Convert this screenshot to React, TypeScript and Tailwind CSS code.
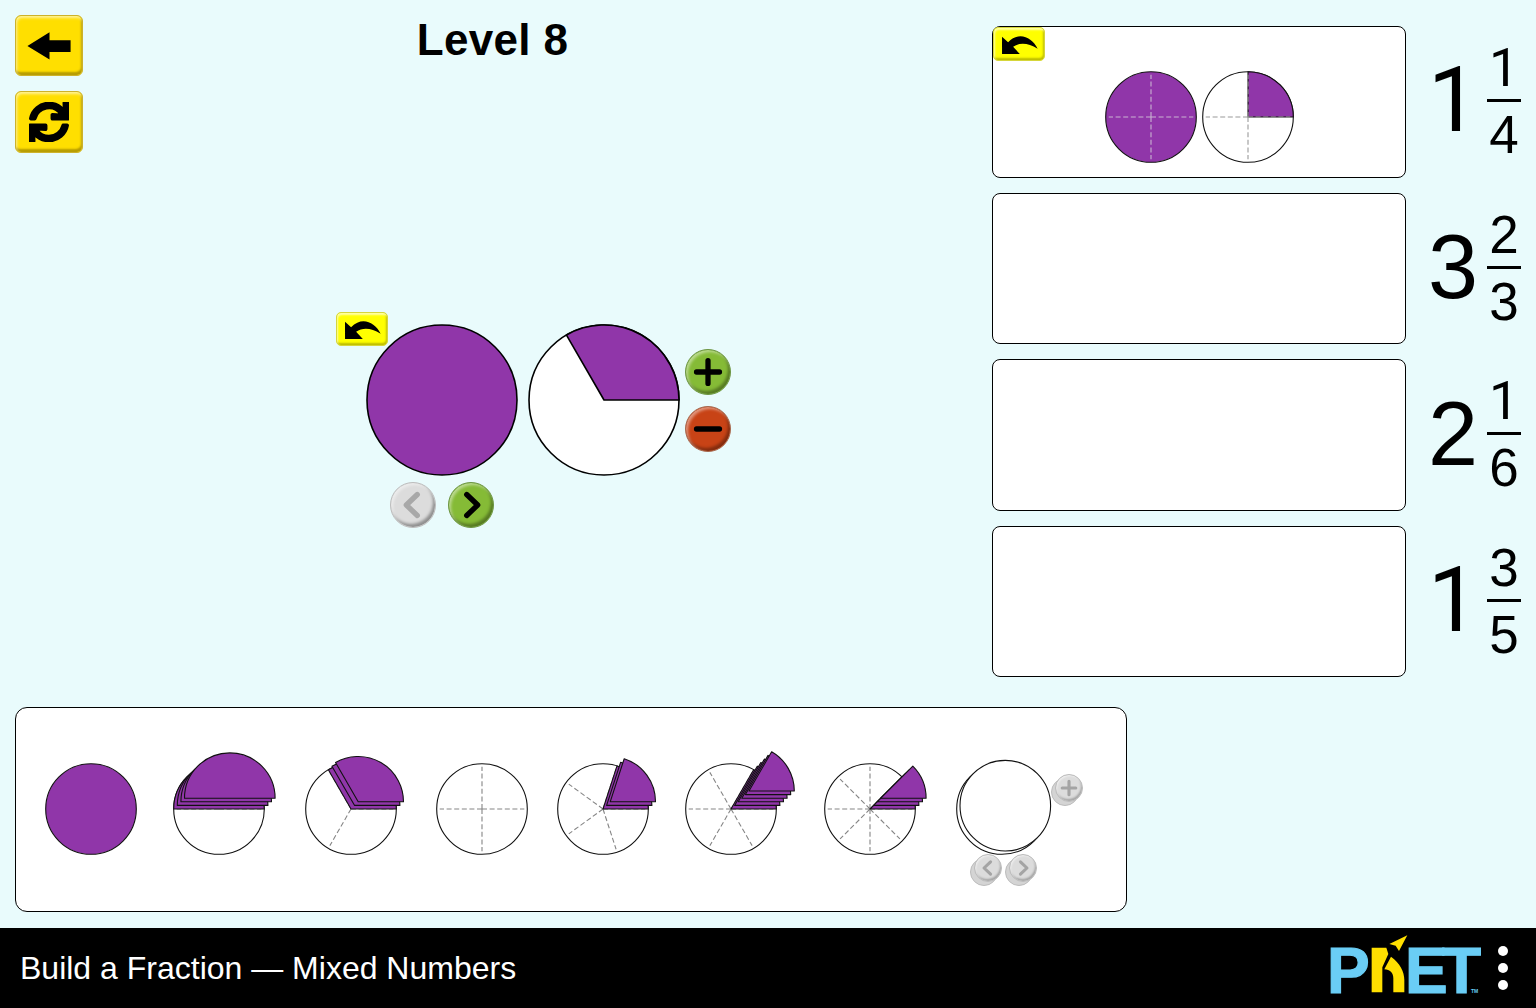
import { FaSync } from "react-icons/fa";

const PURPLE = "#9036a9";
const fontSans = "font-['Liberation_Sans',Arial,sans-serif]";

// wedge from angle 0 going counter-clockwise, centre at origin
function wedgePath(r: number, parts: number) {
  const a = (2 * Math.PI) / parts;
  const x = r * Math.cos(a);
  const y = -r * Math.sin(a);
  const large = parts < 2 ? 1 : 0;
  return `M0 0 L${r} 0 A${r} ${r} 0 ${large} 0 ${x.toFixed(2)} ${y.toFixed(2)} Z`;
}

function Dashes({ r, parts, color = "#858585" }: { r: number; parts: number; color?: string }) {
  const lines = [];
  for (let i = 0; i < parts; i++) {
    const a = (2 * Math.PI * i) / parts;
    lines.push(
      <line
        key={i}
        x1={0}
        y1={0}
        x2={(r - 3) * Math.cos(a)}
        y2={-(r - 3) * Math.sin(a)}
        stroke={color}
        strokeWidth={1.1}
        strokeDasharray="5 2.6"
      />
    );
  }
  return <>{lines}</>;
}

function Pie({
  parts = 1,
  pieces = 0,
  whole = false,
  dashesOnTop = false,
  dashColor,
}: {
  parts?: number;
  pieces?: number;
  whole?: boolean;
  dashesOnTop?: boolean;
  dashColor?: string;
}) {
  const r = 45.3;
  const stack = [];
  for (let i = 0; i < pieces; i++) {
    stack.push(
      <path
        key={i}
        d={wedgePath(r, parts)}
        transform={`translate(${i * 3.6} ${-i * 3.6})`}
        fill={PURPLE}
        stroke="#111"
        strokeWidth={1.1}
        strokeLinejoin="round"
      />
    );
  }
  return (
    <svg width={92} height={92} viewBox="-46 -46 92 92" className="block shrink-0 overflow-visible">
      <circle r={r} fill={whole ? PURPLE : "#fff"} stroke="#111" strokeWidth={1.1} />
      {!dashesOnTop && parts > 1 && <Dashes r={r} parts={parts} />}
      {stack}
      {dashesOnTop && <Dashes r={r} parts={parts} color={dashColor} />}
    </svg>
  );
}

function BigPie({ third = false }: { third?: boolean }) {
  const r = 75;
  return (
    <svg width={152} height={152} viewBox="-76 -76 152 152" className="block shrink-0">
      <circle r={r} fill={third ? "#fff" : PURPLE} stroke="#000" strokeWidth={1.6} />
      {third && <path d={wedgePath(r, 3)} fill={PURPLE} stroke="#000" strokeWidth={1.6} strokeLinejoin="round" />}
    </svg>
  );
}

function UndoIcon() {
  return (
    <svg width={42} height={27} viewBox="60 45 125 80" className="block">
      <path d="M72 62 L72 113 L125 113 L105 92 C125 78 150 80 178 98 C160 62 122 46 90 78 Z" fill="#000" />
    </svg>
  );
}

function UndoButton({ className }: { className: string }) {
  return (
    <div
      className={`absolute z-10 flex h-[34px] w-[52px] items-center justify-center rounded-[5px] border border-[#d6d63a] bg-[#ffff00] shadow-[inset_1px_2px_2px_rgba(255,255,255,0.65),inset_-1px_-2px_2px_rgba(90,90,0,0.4)] ${className}`}
    >
      <UndoIcon />
    </div>
  );
}

function YellowButton({ className, children }: { className: string; children: React.ReactNode }) {
  return (
    <div
      className={`flex w-[68px] items-center justify-center rounded-[6px] border border-[#cdb22a] bg-[#ffdf00] shadow-[inset_1px_2px_3px_rgba(255,255,255,0.6),inset_-1px_-3px_2px_rgba(110,90,0,0.5)] ${className}`}
    >
      {children}
    </div>
  );
}

type IconName = "plus" | "minus" | "left" | "right";

function RoundIcon({ name, color, size }: { name: IconName; color: string; size: number }) {
  const common = { stroke: color, strokeWidth: 5.5, strokeLinecap: "round" as const, strokeLinejoin: "round" as const, fill: "none" };
  return (
    <svg width={size} height={size} viewBox="0 0 46 46" className="block">
      {name === "plus" && <path d="M23 11 V35 M11 23 H35" {...common} />}
      {name === "minus" && <path d="M11 23 H35" {...common} />}
      {name === "left" && <path d="M27.5 12 L16 23 L27.5 34" {...common} />}
      {name === "right" && <path d="M18.5 12 L30 23 L18.5 34" {...common} />}
    </svg>
  );
}

function RoundButton({ name, tone }: { name: IconName; tone: "green" | "red" | "gray" }) {
  const bg =
    tone === "green"
      ? "bg-[#85bb36] border-[#6d9544]"
      : tone === "red"
        ? "bg-[#c84316] border-[#a66a50]"
        : "bg-[#dcdcdc] border-[#bdbdbd]";
  return (
    <div
      className={`flex h-[46px] w-[46px] items-center justify-center rounded-full border shadow-[inset_2px_2px_3px_rgba(255,255,255,0.45),inset_-2px_-3px_3px_rgba(0,0,0,0.35)] ${bg}`}
    >
      <RoundIcon name={name} color={tone === "gray" ? "#a8a8a8" : "#000"} size={46} />
    </div>
  );
}

function SmallGrayButton({ name, className }: { name: IconName; className: string }) {
  return (
    <div className={`absolute h-[28px] w-[28px] ${className}`}>
      <div className="absolute -left-[4px] top-[4px] h-[28px] w-[28px] rounded-full border border-[#bcbcbc] bg-[#d4d4d4]" />
      <div className="absolute inset-0 flex items-center justify-center rounded-full border border-[#bcbcbc] bg-[#dcdcdc] shadow-[inset_1px_1px_2px_rgba(255,255,255,0.6),inset_-1px_-2px_2px_rgba(0,0,0,0.25)]">
        <RoundIcon name={name} color="#a4a4a4" size={28} />
      </div>
    </div>
  );
}

// Liberation's "1" has a foot, the reference's has none
function digitFont(n: number) {
  return n === 1 ? "font-['Roboto',Arial,sans-serif]" : "";
}

function Fraction({ whole, top, bottom }: { whole: number; top: number; bottom: number }) {
  return (
    <div className="ml-[22px] flex items-center text-black">
      <div className={`w-[50px] pb-[2px] text-[90px] leading-[90px] ${digitFont(whole)}`}>{whole}</div>
      <div className="ml-[9px] flex w-[34px] flex-col items-center text-[53px] leading-[50px]">
        <div className={`mb-[6px] ${digitFont(top)}`}>{top}</div>
        <div className="h-[3px] w-full bg-black" />
        <div className={`mt-[8px] ${digitFont(bottom)}`}>{bottom}</div>
      </div>
    </div>
  );
}

const targets = [
  { whole: 1, top: 1, bottom: 4 },
  { whole: 3, top: 2, bottom: 3 },
  { whole: 2, top: 1, bottom: 6 },
  { whole: 1, top: 3, bottom: 5 },
];

const trayItems = [
  { cls: "", parts: 1, pieces: 0, whole: true },
  { cls: "ml-[36px]", parts: 2, pieces: 4, whole: false },
  { cls: "ml-[39.7px]", parts: 3, pieces: 3, whole: false },
  { cls: "ml-[39.3px]", parts: 4, pieces: 0, whole: false },
  { cls: "ml-[29px]", parts: 5, pieces: 3, whole: false },
  { cls: "ml-[36.4px]", parts: 6, pieces: 6, whole: false },
  { cls: "ml-[46.6px]", parts: 8, pieces: 4, whole: false },
];

function PhetLogo() {
  return (
    <svg width={152} height={66} viewBox="0 0 152 66" className="block shrink-0 overflow-visible">
      <g fontFamily="'Liberation Sans', Arial, sans-serif" fontWeight={700} fontSize={64} fill="#6acdf5" stroke="#6acdf5" strokeWidth={1.2}>
        <text x={-3} y={57.5}>P</text>
        <text x={75} y={57.5} letterSpacing={-5.7}>ET</text>
      </g>
      <text x={141} y={57.5} fontFamily="'Liberation Sans', Arial, sans-serif" fontSize={5} fontWeight={700} fill="#6acdf5">TM</text>
      <g transform="translate(-5 -5) scale(0.3333)" fill="#ffdf00">
        <path d="M140 53 L184 53 L190 72 L172 112 L172 187 L140 187 Z" />
        <path d="M198 80 C225 100 238 125 238 150 L238 187 L205 187 L205 145 C205 128 195 119 178 118 Z" />
        <path d="M247 16 L193 42 L212 47 L222 63 Z" />
      </g>
    </svg>
  );
}

export default function App() {
  return (
    <div className={`flex h-[1008px] w-[1536px] flex-col overflow-hidden bg-[#e9fbfc] ${fontSans}`}>
      <main className="h-[928px] px-[15px] pt-[15px]">
        <div className="flex h-[691.6px]">
          {/* back / refresh */}
          <div className="flex w-[68px] flex-col gap-[15px]">
            <YellowButton className="h-[61px]">
              <svg width={44} height={28} viewBox="28 32 43 27.5" className="block">
                <polygon points="28.3,45.7 50,32.3 50,40 70.7,40 70.7,51.7 50,51.7 50,59" fill="#000" />
              </svg>
            </YellowButton>
            <YellowButton className="h-[62px]">
              <FaSync size={40} color="#000" stroke="#000" strokeWidth={24} />
            </YellowButton>
          </div>

          {/* level title and the fraction being built */}
          <div className="w-[909px]">
            <h1 className="w-[819px] text-center text-[44px] font-bold leading-[50px] tracking-[0.3px] text-black">Level 8</h1>
            <div className="ml-[283px] mt-[259px]">
              <div className="relative flex items-center">
                <UndoButton className="-left-[30px] -top-[12px]" />
                <BigPie />
                <div className="ml-[10px]">
                  <BigPie third />
                </div>
                <div className="ml-[5px] flex flex-col gap-[11px]">
                  <RoundButton name="plus" tone="green" />
                  <RoundButton name="minus" tone="red" />
                </div>
              </div>
              <div className="ml-[24px] mt-[6px] flex gap-[12px]">
                <RoundButton name="left" tone="gray" />
                <RoundButton name="right" tone="green" />
              </div>
            </div>
          </div>

          {/* target cards */}
          <div className="flex flex-col gap-[15px] pt-[11px]">
            {targets.map((t, i) => (
              <div key={i} className="flex">
                <div className="relative flex h-[151.6px] w-[414px] items-center justify-center gap-[5px] rounded-[8px] border-[1.5px] border-black bg-white pt-[30px]">
                  {i === 0 && (
                    <>
                      <UndoButton className="left-0 top-0" />
                      <Pie whole parts={4} dashesOnTop dashColor="#c9b3d2" />
                      <Pie parts={4} pieces={1} dashesOnTop dashColor="#9a9a9a" />
                    </>
                  )}
                </div>
                <Fraction whole={t.whole} top={t.top} bottom={t.bottom} />
              </div>
            ))}
          </div>
        </div>

        {/* piece tray */}
        <div className="flex h-[205px] w-[1112px] items-center rounded-[12px] border-[1.5px] border-black bg-white pl-[29px]">
          {trayItems.map((item, i) => (
            <div key={i} className={item.cls}>
              <Pie parts={item.parts} pieces={item.pieces} whole={item.whole} />
            </div>
          ))}
          <div className="relative ml-[39.7px] h-[92px] w-[92px]">
            <svg width={92} height={92} viewBox="-46 -46 92 92" className="block overflow-visible">
              <circle r={45.3} fill="#fff" stroke="#111" strokeWidth={1.1} />
              <circle cx={3.3} cy={-3.3} r={45.3} fill="#fff" stroke="#111" strokeWidth={1.1} />
            </svg>
            <SmallGrayButton name="plus" className="left-[99px] top-[11px]" />
            <SmallGrayButton name="left" className="left-[18px] top-[91px]" />
            <SmallGrayButton name="right" className="left-[53px] top-[91px]" />
          </div>
        </div>
      </main>

      <footer className="flex h-[80px] items-center bg-black pl-[20px] pr-[28px]">
        <div className="flex-1 text-[32px] leading-none text-white">Build a Fraction — Mixed Numbers</div>
        <PhetLogo />
        <div className="ml-[16px] flex flex-col gap-[7px]">
          <div className="h-[10px] w-[10px] rounded-full bg-white" />
          <div className="h-[10px] w-[10px] rounded-full bg-white" />
          <div className="h-[10px] w-[10px] rounded-full bg-white" />
        </div>
      </footer>
    </div>
  );
}
